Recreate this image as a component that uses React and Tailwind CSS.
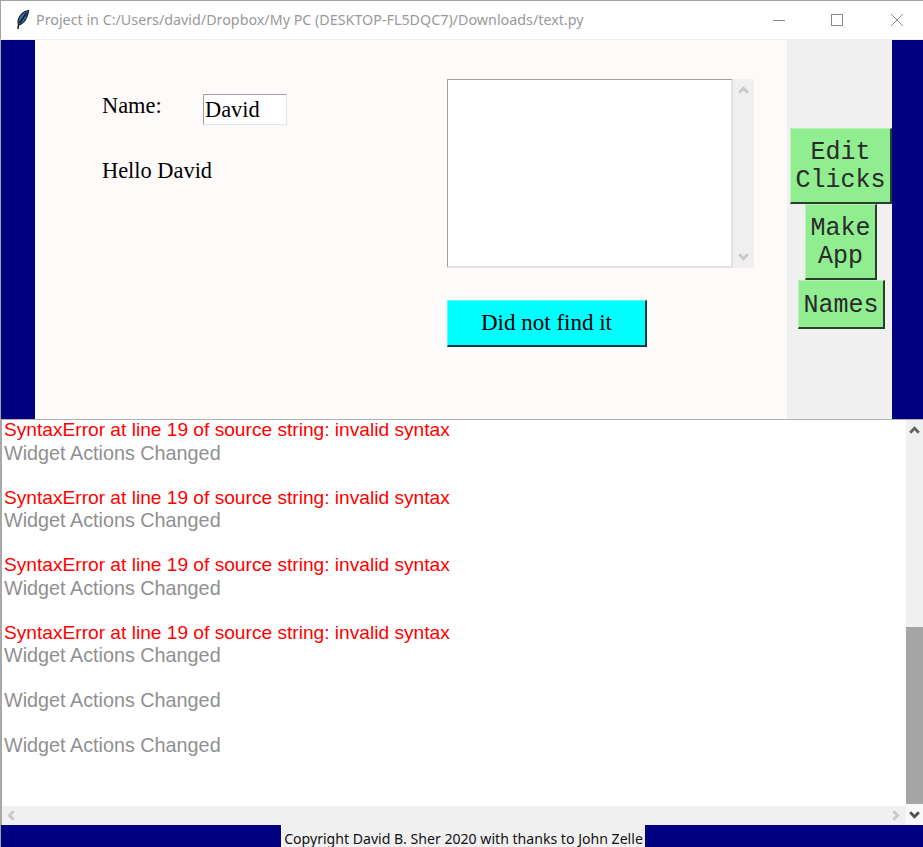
const serif = { fontFamily: '"Liberation Serif", serif' };

function Chevron({ dir, color, size = 13, className = "" }) {
  const d = {
    up: "M2 8 L6 4 L10 8",
    down: "M2 4 L6 8 L10 4",
    left: "M8 2 L4 6 L8 10",
    right: "M4 2 L8 6 L4 10",
  }[dir];
  return (
    <svg width={size} height={size} viewBox="0 0 12 12" className={className}>
      <path d={d} fill="none" stroke={color} strokeWidth="2.6" />
    </svg>
  );
}

function Feather() {
  return (
    <svg width="14" height="20" viewBox="0 0 14 20" className="ml-[15px]">
      <path d="M12.5 0.5 C8 1.5 3.5 5 2.2 10 C1.8 12 2 13.5 2.6 15 C6 14 9.5 10.5 11 6.5 C12 4 12.6 2 12.5 0.5 Z" fill="#3a70ad" stroke="#16202f" strokeWidth="1.2" />
      <path d="M10.5 3 L3.5 13 M2.6 15 L1.8 19" stroke="#0c1218" strokeWidth="1.4" fill="none" />
    </svg>
  );
}

function GreenButton({ className, children }) {
  return (
    <div
      className={`bg-[#90ee90] border-t border-l border-t-[#b4f4b4] border-l-[#b4f4b4] border-r-2 border-b-2 border-r-[#26402a] border-b-[#26402a] text-[25px] leading-[28px] text-center text-[#2a2a2a] flex flex-col items-center justify-center ${className}`}
      style={{ fontFamily: '"Liberation Mono", monospace' }}
    >
      {children}
    </div>
  );
}

const logLines = [
  ["e", "SyntaxError at line 19 of source string: invalid syntax"],
  ["w", "Widget Actions Changed"],
  ["b", ""],
  ["e", "SyntaxError at line 19 of source string: invalid syntax"],
  ["w", "Widget Actions Changed"],
  ["b", ""],
  ["e", "SyntaxError at line 19 of source string: invalid syntax"],
  ["w", "Widget Actions Changed"],
  ["b", ""],
  ["e", "SyntaxError at line 19 of source string: invalid syntax"],
  ["w", "Widget Actions Changed"],
  ["b", ""],
  ["w", "Widget Actions Changed"],
  ["b", ""],
  ["w", "Widget Actions Changed"],
];

export default function App() {
  return (
    <div className="w-[923px] h-[847px] flex flex-col bg-white overflow-hidden">
      {/* Title bar */}
      <div className="h-[39px] shrink-0 flex items-center bg-white border-t border-l border-[#a3a3a3] border-b-0">
        <Feather />
        <span
          className="ml-[6px] text-[14.3px] text-[#999999] whitespace-nowrap"
          style={{ fontFamily: '"Noto Sans", sans-serif' }}
        >
          Project in C:/Users/david/Dropbox/My PC (DESKTOP-FL5DQC7)/Downloads/text.py
        </span>
        <div className="ml-auto flex items-center">
          <div className="w-[12px] h-px bg-[#8a8a8a] mr-[46px]" />
          <div className="w-[12px] h-[12px] border border-[#8a8a8a] mr-[47px]" />
          <svg width="14" height="14" viewBox="0 0 14 14" className="mr-[19px]">
            <path d="M1 1 L13 13 M13 1 L1 13" stroke="#8a8a8a" strokeWidth="1" fill="none" />
          </svg>
        </div>
      </div>

      {/* Upper frame */}
      <div className="h-[380px] shrink-0 flex bg-[#000080] border-l border-l-[#a3a3a3] border-t border-t-[#f0f0f0]">
        <div className="w-[34px] shrink-0" />
        <div className="w-[752px] shrink-0 flex bg-[#fffafa]" style={serif}>
          <div className="w-[412px] shrink-0 pl-[67px] pt-[53px] text-[22.4px] text-black">
            <div className="flex items-start">
              <div className="w-[101px] shrink-0 leading-[26px]">Name:</div>
              <div className="w-[84px] h-[31px] mt-[1px] bg-white border-t border-l border-t-[#a0a0a0] border-l-[#a0a0a0] border-r border-b border-r-[#e3e3e3] border-b-[#e3e3e3] leading-[30px] pl-px">
                David
              </div>
            </div>
            <div className="mt-[33px] leading-[26px]">Hello David</div>
          </div>
          <div className="pt-[39px] flex flex-col items-start">
            <div className="flex h-[189px]">
              <div className="w-[286px] bg-white border-t border-l border-t-[#a0a0a0] border-l-[#a0a0a0] border-r-2 border-b-2 border-r-[#e3e3e3] border-b-[#e3e3e3]" />
              <div className="w-[21px] bg-[#f0f0f0] flex flex-col items-center justify-between py-[5px]">
                <Chevron dir="up" color="#c8c8c8" />
                <Chevron dir="down" color="#c8c8c8" />
              </div>
            </div>
            <div className="mt-[32px] w-[200px] h-[47px] bg-[#00ffff] border-t border-l border-t-[#55ffff] border-l-[#55ffff] border-r-2 border-b-2 border-r-[#123c3c] border-b-[#123c3c] flex items-center justify-center text-[23px] text-black">
              Did not find it
            </div>
          </div>
        </div>
        <div className="w-[105px] shrink-0 bg-[#f0f0f0] pt-[88px] flex flex-col items-start">
          <GreenButton className="ml-[3px] w-[102px] h-[76px] pt-[3px]">
            <span>Edit</span>
            <span>Clicks</span>
          </GreenButton>
          <GreenButton className="ml-[18px] w-[72px] h-[76px] pt-[3px]">
            <span>Make</span>
            <span>App</span>
          </GreenButton>
          <GreenButton className="ml-[11px] w-[87px] h-[49px] pt-[4px]">
            <span>Names</span>
          </GreenButton>
        </div>
        <div className="flex-1" />
      </div>

      {/* Log area */}
      <div className="h-[406px] shrink-0 flex bg-white border-t border-t-[#b0b0b0] border-l-2 border-l-[#a8a8a8]">
        <div className="w-[904px] shrink-0 flex flex-col">
          <div
            className="h-[386px] shrink-0 overflow-hidden pl-[2px] leading-[20px] whitespace-nowrap"
            style={{ fontFamily: '"Liberation Sans", sans-serif' }}
          >
            {logLines.map(([k, t], i) => (
              <div
                key={i}
                className={`h-[22.5px] ${k === "e" ? "text-[#ff0000] text-[19.15px]" : "text-[#909090] text-[19.8px]"}`}
              >
                {t}
              </div>
            ))}
          </div>
          <div className="flex-1 bg-[#f0f0f0] flex items-center justify-between pl-[3px] pr-[4px]">
            <Chevron dir="left" color="#c8c8c8" />
            <Chevron dir="right" color="#c8c8c8" />
          </div>
        </div>
        <div className="flex-1 flex flex-col bg-[#f0f0f0] items-stretch">
          <div className="h-[20px] shrink-0 flex items-center justify-center">
            <Chevron dir="up" color="#606060" />
          </div>
          <div className="flex-1" />
          <div className="h-[177px] shrink-0 bg-[#a6a6a6]" />
          <div className="h-[21px] shrink-0 bg-[#f8f8f8] flex items-center justify-center">
            <Chevron dir="down" color="#505050" />
          </div>
        </div>
      </div>

      {/* Footer */}
      <div className="flex-1 bg-[#000080] border-l border-l-[#a3a3a3] flex justify-center pl-px items-stretch">
        <div
          className="w-[364px] bg-[#f0f0f0] pl-[2px] text-center text-[14.1px] leading-[27px] text-[#111111] whitespace-nowrap"
          style={{ fontFamily: '"Noto Sans", sans-serif' }}
        >
          Copyright David B. Sher 2020 with thanks to John Zelle
        </div>
      </div>
    </div>
  );
}
